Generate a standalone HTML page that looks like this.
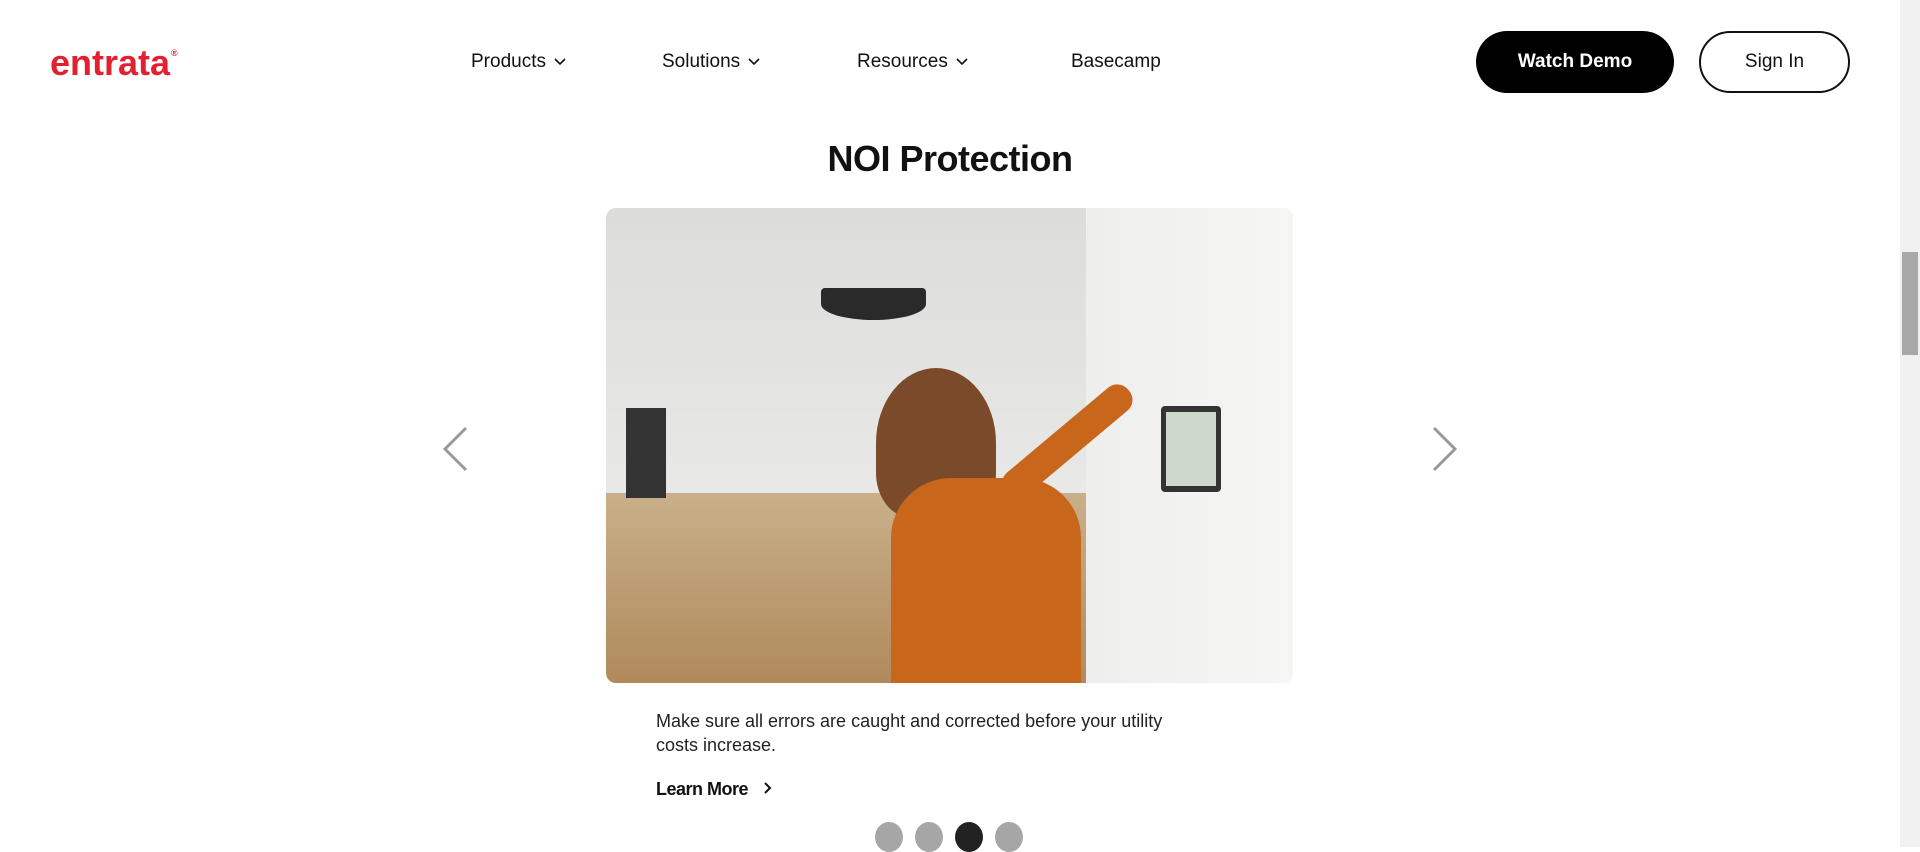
<!DOCTYPE html>
<html><head><meta charset="utf-8"><style>
*{margin:0;padding:0;box-sizing:border-box}
body{width:1920px;height:847px;overflow:hidden;background:#fff;font-family:"Liberation Sans",sans-serif;color:#111;position:relative}
.a{position:absolute}
.nav{font-size:19px;top:51px;color:#111}
.nav svg{margin-left:8px;vertical-align:middle}
.btn{position:absolute;top:31px;height:62px;border-radius:31px;font-size:19px;display:flex;align-items:center;justify-content:center}
</style></head><body>
<div class="a" style="left:50px;top:42px;font-size:36px;font-weight:bold;color:#e3202e;letter-spacing:0px">entrata<sup style="font-size:9px;vertical-align:top;position:relative;top:6px;left:1px">®</sup></div>
<div class="a nav" style="left:471px">Products<svg width="12" height="8"><path d="M1 1l5 5 5-5" stroke="#111" stroke-width="1.6" fill="none"/></svg></div>
<div class="a nav" style="left:662px">Solutions<svg width="12" height="8"><path d="M1 1l5 5 5-5" stroke="#111" stroke-width="1.6" fill="none"/></svg></div>
<div class="a nav" style="left:857px">Resources<svg width="12" height="8"><path d="M1 1l5 5 5-5" stroke="#111" stroke-width="1.6" fill="none"/></svg></div>
<div class="a nav" style="left:1071px">Basecamp</div>
<div class="btn" style="left:1476px;width:198px;background:#000;color:#fff;font-weight:bold">Watch Demo</div>
<div class="btn" style="left:1699px;width:151px;border:2px solid #111;color:#111">Sign In</div>
<div class="a" style="left:1900px;top:0;width:20px;height:847px;background:#f1f1f1"></div>
<div class="a" style="left:1902px;top:252px;width:16px;height:103px;background:#a8a8a8"></div>
<div class="a" style="left:0;width:1900px;top:138px;text-align:center;font-size:36px;font-weight:bold;letter-spacing:-0.5px">NOI Protection</div>
<div class="a" style="left:606px;top:208px;width:687px;height:475px;border-radius:10px;overflow:hidden;background:#e4e4e2">
 <div class="a" style="left:0;top:0;width:480px;height:475px;background:linear-gradient(#dcdcda,#e8e8e6 60%,#c9b08a 60%,#b08a5c)"></div>
 <div class="a" style="left:480px;top:0;width:207px;height:475px;background:linear-gradient(90deg,#eeeeec,#f6f6f5)"></div>
 <div class="a" style="left:215px;top:80px;width:105px;height:32px;background:#2a2a2a;border-radius:4px 4px 50% 50%"></div>
 <div class="a" style="left:555px;top:198px;width:60px;height:86px;background:#333;border-radius:4px"></div>
 <div class="a" style="left:560px;top:204px;width:50px;height:74px;background:#cfd8cc"></div>
 <div class="a" style="left:270px;top:160px;width:120px;height:150px;background:#7a4a2a;border-radius:50% 50% 30% 30%"></div>
 <div class="a" style="left:285px;top:270px;width:190px;height:205px;background:#c8661c;border-radius:60px 60px 0 0"></div>
 <div class="a" style="left:400px;top:270px;width:160px;height:30px;background:#c8661c;transform:rotate(-40deg);transform-origin:left;border-radius:14px"></div>
 <div class="a" style="left:20px;top:200px;width:40px;height:90px;background:#333"></div>
</div>
<svg class="a" style="left:440px;top:425px" width="30" height="48"><path d="M26 3L5 24l21 21" stroke="#999" stroke-width="3" fill="none"/></svg>
<svg class="a" style="left:1430px;top:425px" width="30" height="48"><path d="M4 3l21 21L4 45" stroke="#999" stroke-width="3" fill="none"/></svg>
<div class="a" style="left:656px;top:709px;width:620px;font-size:18px;line-height:24px;color:#222">Make sure all errors are caught and corrected before your utility<br>costs increase.</div>
<div class="a" style="left:656px;top:779px;font-size:18px;font-weight:bold;letter-spacing:-0.5px">Learn More <svg width="14" height="14" style="margin-left:8px"><path d="M4 2l5 5-5 5" stroke="#111" stroke-width="2" fill="none"/></svg></div>
<div class="a" style="left:875px;top:822px;width:28px;height:30px;border-radius:50%;background:#a6a6a6"></div>
<div class="a" style="left:915px;top:822px;width:28px;height:30px;border-radius:50%;background:#a6a6a6"></div>
<div class="a" style="left:955px;top:822px;width:28px;height:30px;border-radius:50%;background:#222"></div>
<div class="a" style="left:995px;top:822px;width:28px;height:30px;border-radius:50%;background:#a6a6a6"></div>
</body></html>
